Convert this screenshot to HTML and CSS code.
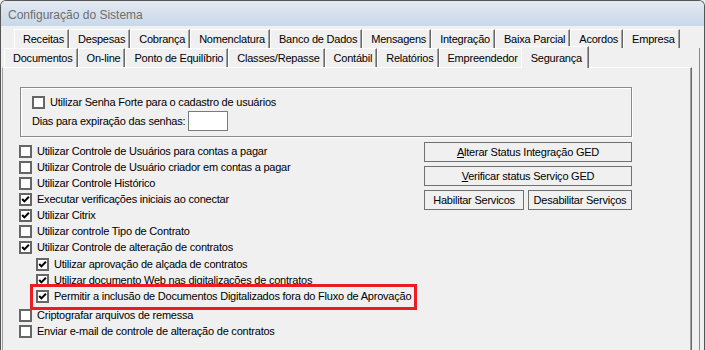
FILE: index.html
```html
<!DOCTYPE html>
<html lang="pt-BR">
<head>
  <meta charset="UTF-8" />
  <title>Configuração do Sistema</title>
  <link rel="stylesheet" href="styles.css">
</head>
<body>

  <div class="window">
    <div class="titlebar">Configuração do Sistema</div>

    <div class="client">
      <div class="tabrow row1">
        <span class="tab">Receitas</span>
        <span class="tab">Despesas</span>
        <span class="tab">Cobrança</span>
        <span class="tab">Nomenclatura</span>
        <span class="tab">Banco de Dados</span>
        <span class="tab">Mensagens</span>
        <span class="tab">Integração</span>
        <span class="tab">Baixa Parcial</span>
        <span class="tab">Acordos</span>
        <span class="tab">Empresa</span>
      </div>

      <div class="frame">
        <div class="tabrow row2">
          <span class="tab">Documentos</span>
          <span class="tab">On-line</span>
          <span class="tab">Ponto de Equilíbrio</span>
          <span class="tab">Classes/Repasse</span>
          <span class="tab">Contábil</span>
          <span class="tab">Relatórios</span>
          <span class="tab">Empreendedor</span>
          <span class="tab active">Segurança</span>
        </div>

        <div class="page">
          <div class="group">
            <label class="check">
              <span class="box"></span>
              Utilizar Senha Forte para o cadastro de usuários
            </label>
            <div class="field">
              <span>Dias para expiração das senhas:</span>
              <span class="input"></span>
            </div>
          </div>

          <div class="lower">
            <div class="checks">
              <label class="check"><span class="box"></span>Utilizar Controle de Usuários para contas a pagar</label>
              <label class="check"><span class="box"></span>Utilizar Controle de Usuário criador em contas a pagar</label>
              <label class="check"><span class="box"></span>Utilizar Controle Histórico</label>
              <label class="check"><span class="box on"><svg viewBox="0 0 9 9"><path d="M1.2 4 L3.4 6.4 L7.9 1.7"/></svg></span>Executar verificações iniciais ao conectar</label>
              <label class="check"><span class="box on"><svg viewBox="0 0 9 9"><path d="M1.2 4 L3.4 6.4 L7.9 1.7"/></svg></span>Utilizar Citrix</label>
              <label class="check"><span class="box"></span>Utilizar controle Tipo de Contrato</label>
              <label class="check"><span class="box on"><svg viewBox="0 0 9 9"><path d="M1.2 4 L3.4 6.4 L7.9 1.7"/></svg></span>Utilizar Controle de alteração de contratos</label>
              <div class="sub">
                <label class="check"><span class="box on"><svg viewBox="0 0 9 9"><path d="M1.2 4 L3.4 6.4 L7.9 1.7"/></svg></span>Utilizar aprovação de alçada de contratos</label>
                <label class="check"><span class="box on"><svg viewBox="0 0 9 9"><path d="M1.2 4 L3.4 6.4 L7.9 1.7"/></svg></span>Utilizar documento Web nas digitalizações de contratos</label>
                <label class="check"><span class="box on"><svg viewBox="0 0 9 9"><path d="M1.2 4 L3.4 6.4 L7.9 1.7"/></svg></span>Permitir a inclusão de Documentos Digitalizados fora do Fluxo de Aprovação</label>
              </div>
              <div class="after">
                <label class="check"><span class="box"></span>Criptografar arquivos de remessa</label>
                <label class="check"><span class="box"></span>Enviar e-mail de controle de alteração de contratos</label>
              </div>
            </div>

            <div class="actions">
              <button class="btn"><u>A</u>lterar Status Integração GED</button>
              <button class="btn"><u>V</u>erificar status Serviço GED</button>
              <div class="pair">
                <button class="btn">Habilitar Servicos</button>
                <button class="btn">Desabilitar Serviços</button>
              </div>
            </div>
          </div>

          <div class="highlight"></div>
        </div>
      </div>
    </div>
  </div>

</body>
</html>
```

FILE: styles.css
```css
* { margin: 0; padding: 0; box-sizing: border-box; }
body {
  background: #f0f0f0;
  font-family: 'Liberation Sans', Arial, sans-serif;
  font-size: 11px;
  letter-spacing: -0.22px;
  color: #000;
}
.window {
  width: 705px;
  height: 350px;
  border: 1px solid #555;
  border-bottom: none;
  border-radius: 6px 6px 0 0;
  overflow: hidden;
  background: #f0f0f0;
}
.titlebar {
  height: 25px;
  padding-left: 7px;
  line-height: 28px;
  font-size: 12px;
  letter-spacing: 0;
  color: #6e6e6e;
  background: linear-gradient(#e3e9f0, #c9d8ea);
}
.client {
  padding-top: 3px;
}
.tabrow {
  display: flex;
  height: 19px;
}
.row1 { padding-left: 13px; }
.row2 { padding-left: 3px; position: relative; z-index: 1; }
.tab {
  line-height: 18px;
  padding: 0 4px 0 8px;
  border-left: 1px solid #fff;
  border-top: 1px solid #fff;
  border-right: 1px solid #696969;
  box-shadow: inset -1px 0 #a0a0a0;
  white-space: nowrap;
}
.tab.active {
  margin-left: -2px;
  margin-top: -2px;
  height: 22px;
  line-height: 22px;
  padding: 0 6px 0 9px;
  background: #f0f0f0;
}
.frame {
  width: 699px;
  height: 322px;
  border-right: 1px solid #8c8c8c;
}
.page {
  position: relative;
  margin-left: 1px;
  width: 690px;
  height: 303px;
  border-top: 1px solid #fff;
  border-left: 1px solid #a0a0a0;
  border-right: 1px solid #696969;
  box-shadow: inset -1px 0 #a0a0a0;
  padding: 19px 0 0 17px;
}
.group {
  width: 612px;
  height: 50px;
  border: 1px solid #8a8a8a;
  box-shadow: inset 1px 1px 0 #fff, 1px 1px 0 #fff;
  padding: 6px 0 0 11px;
}
.check {
  display: flex;
  align-items: center;
  height: 16px;
  gap: 5px;
  white-space: nowrap;
}
.box {
  width: 13px;
  height: 13px;
  border: 2px solid #666;
  background: #fff;
  flex-shrink: 0;
}
.box svg {
  display: block;
  width: 9px;
  height: 9px;
}
.box svg path {
  fill: none;
  stroke: #000;
  stroke-width: 2;
}
.field {
  display: flex;
  align-items: center;
  gap: 3px;
  margin-top: 1px;
}
.input {
  width: 40px;
  height: 20px;
  background: #fff;
  border: 1px solid #7a7a7a;
}
.lower {
  display: flex;
  width: 612px;
  margin-top: 5px;
}
.checks {
  margin-left: -1px;
  padding-top: 1px;
}
.sub {
  padding-left: 17px;
  margin-top: 1px;
}
.after {
  margin-top: 3px;
}
.actions {
  margin-left: auto;
  width: 208px;
  display: flex;
  flex-direction: column;
  gap: 4px;
}
.btn {
  height: 20px;
  border: 1px solid #707070;
  background: #f0f0f0;
  font: inherit;
  letter-spacing: inherit;
  color: #000;
}
.pair {
  display: flex;
  gap: 4px;
}
.pair .btn:first-child { width: 100px; }
.pair .btn:last-child { flex: 1; }
.highlight {
  position: absolute;
  left: 27px;
  top: 216px;
  width: 387px;
  height: 26px;
  border: 3px solid #ed1c24;
}
```
